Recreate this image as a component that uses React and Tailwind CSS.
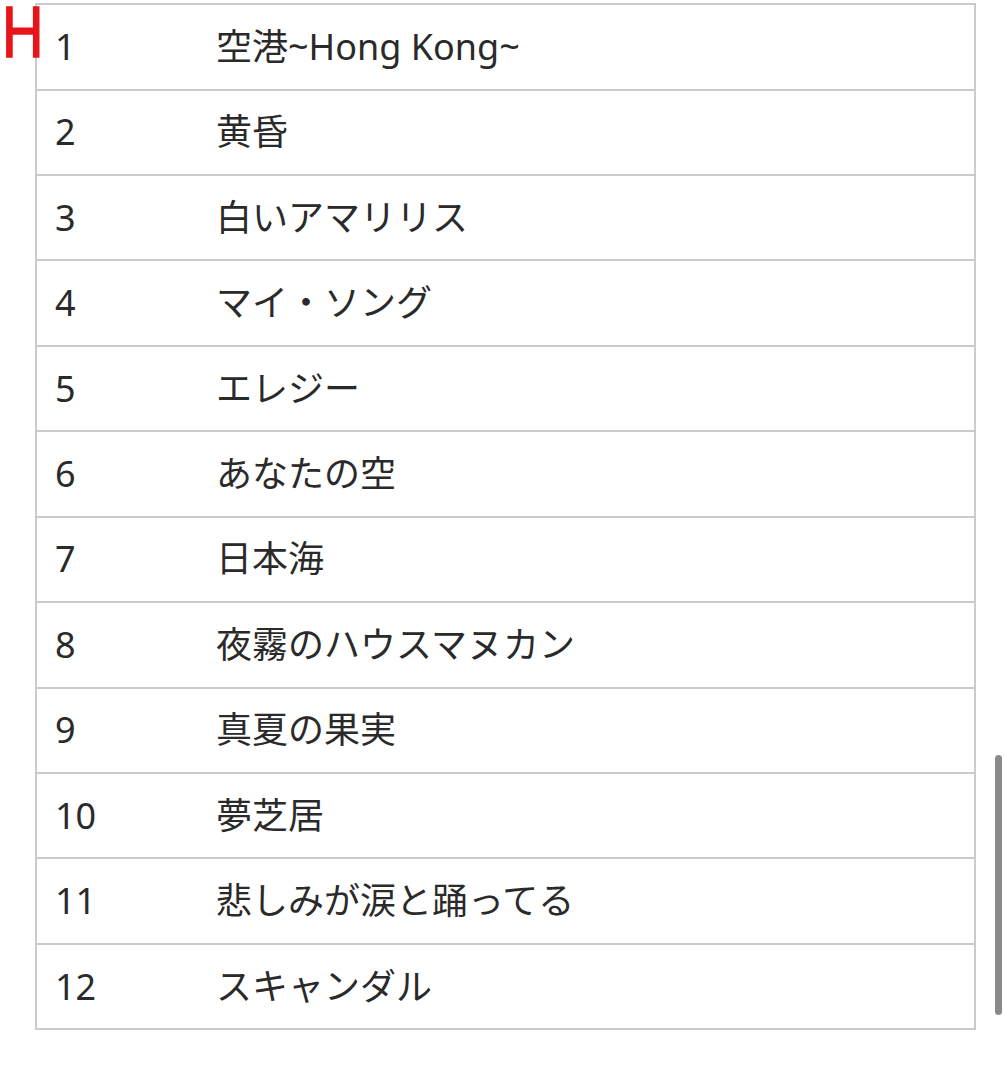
import React from "react";

const tracks = [
    "空港~Hong Kong~",
    "黄昏",
    "白いアマリリス",
    "マイ・ソング",
    "エレジー",
    "あなたの空",
    "日本海",
    "夜霧のハウスマヌカン",
    "真夏の果実",
    "夢芝居",
    "悲しみが涙と踊ってる",
    "スキャンダル",
];

export default function App() {
    return (
        <div className="relative w-[1004px] h-[1080px] bg-white overflow-hidden font-['Noto_Sans','Noto_Sans_CJK_JP',sans-serif] text-[#2a2a2a]">
            {/* marker */}
            <div className="absolute left-[2px] top-[6px] z-10 text-[72px] leading-[52px] text-[#e8141b] font-['Liberation_Sans',sans-serif] scale-x-[0.8] origin-left [-webkit-text-stroke:1.5px_#e8141b]">
                H
            </div>

            <div className="ml-[35px] mt-[3px] w-[941px] border-2 border-[#cbcbcf]">
                {tracks.map((title, i) => (
                    <div
                        key={i}
                        className={
                            i === 0
                                ? "flex items-center h-[83.5px] pl-[18px] text-[36px]"
                                : "flex items-center h-[85.45px] pl-[18px] text-[36px] border-t-2 border-[#cbcbcf]"
                        }
                    >
                        <span className="w-[161px] shrink-0">{i + 1}</span>
                        <span>{title}</span>
                    </div>
                ))}
            </div>

            {/* scrollbar */}
            <div className="absolute left-[995px] top-[755px] w-[7px] h-[260px] rounded-full bg-[#8a8a8a]" />
        </div>
    );
}
